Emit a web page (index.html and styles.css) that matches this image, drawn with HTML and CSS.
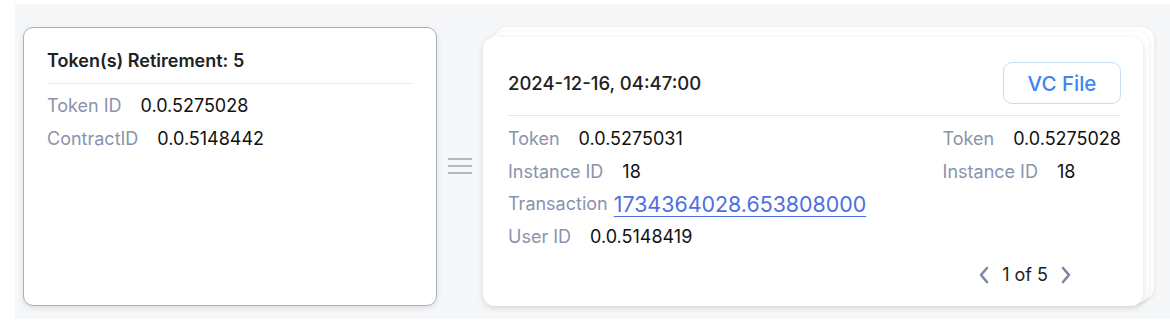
FILE: index.html
```html
<!DOCTYPE html>
<html lang="en">
<head>
    <meta charset="UTF-8">
    <meta name="viewport" content="width=device-width, initial-scale=1.0">
    <title>Token Retirement</title>
    <link rel="stylesheet" href="styles.css">
</head>
<body>
    <div class="board">
        <div class="retire-card">
            <div class="retire-title">Token(s) Retirement: 5</div>
            <div class="row"><span class="label">Token ID</span><span class="value">0.0.5275028</span></div>
            <div class="row"><span class="label">ContractID</span><span class="value">0.0.5148442</span></div>
        </div>

        <div class="handle">
            <span></span><span></span><span></span>
        </div>

        <div class="stack">
            <div class="stack-back back-2"></div>
            <div class="stack-back back-1"></div>
            <div class="vc-card">
                <div class="vc-head">
                    <span class="vc-date">2024-12-16, 04:47:00</span>
                    <button type="button" class="vc-btn">VC File</button>
                </div>
                <div class="vc-body">
                    <div class="vc-col">
                        <div class="row"><span class="label">Token</span><span class="value">0.0.5275031</span></div>
                        <div class="row"><span class="label">Instance ID</span><span class="value">18</span></div>
                        <div class="row"><span class="label">Transaction</span><a class="tx-link" href="#">1734364028.653808000</a></div>
                        <div class="row"><span class="label">User ID</span><span class="value">0.0.5148419</span></div>
                    </div>
                    <div class="vc-col">
                        <div class="row"><span class="label">Token</span><span class="value">0.0.5275028</span></div>
                        <div class="row"><span class="label">Instance ID</span><span class="value">18</span></div>
                    </div>
                </div>
                <div class="pager">
                    <svg width="12" height="18" viewBox="0 0 12 18"><path d="M9 2 L3 9 L9 16" fill="none" stroke="#7d87a3" stroke-width="2.6" stroke-linecap="round" stroke-linejoin="round"/></svg>
                    <span class="pager-text">1 of 5</span>
                    <svg width="12" height="18" viewBox="0 0 12 18"><path d="M3 2 L9 9 L3 16" fill="none" stroke="#7d87a3" stroke-width="2.6" stroke-linecap="round" stroke-linejoin="round"/></svg>
                </div>
            </div>
        </div>
    </div>
</body>
</html>
```
FILE: styles.css
```css
body {
    margin: 0;
    background-color: #ffffff;
    font-family: Inter, "Noto Sans", sans-serif;
    color: #111;
}
.board {
    margin: 4px 0 0 15px;
    height: 315px;
    box-sizing: border-box;
    padding: 23px 0 0 8px;
    background-color: #f6f7f9;
    display: flex;
    align-items: flex-start;
}
.retire-card {
    width: 414px;
    height: 279px;
    box-sizing: border-box;
    padding: 22px 24px 0 23px;
    background-color: #fff;
    border: 1.5px solid #a9afc1;
    border-radius: 10px;
    box-shadow: 0 2px 6px rgba(0, 0, 0, 0.1);
}
.retire-title {
    font-size: 18px;
    font-weight: 600;
    line-height: 22px;
    color: #222;
    padding-bottom: 11px;
    border-bottom: 1px solid #e8ebf0;
    margin-bottom: 5px;
}
.row {
    display: flex;
    align-items: center;
    height: 33px;
    font-size: 18px;
    white-space: nowrap;
}
.label {
    color: #8a93ac;
    margin-right: 19px;
}
.value {
    color: #111;
}
.handle {
    width: 24px;
    margin: 131px 11px 0 11px;
    display: flex;
    flex-direction: column;
    gap: 5px;
}
.handle span {
    height: 2px;
    background-color: #b4b8c3;
}
.stack {
    position: relative;
    padding: 10px 11px 0 0;
}
.stack-back {
    position: absolute;
    background-color: #fff;
    border-radius: 12px;
    box-shadow: 0 1px 4px rgba(0, 0, 0, 0.1);
}
.back-2 {
    top: 0;
    left: 12px;
    right: 0;
    height: 273px;
}
.back-1 {
    top: 5px;
    left: 7px;
    right: 5px;
    height: 271px;
}
.vc-card {
    position: relative;
    width: 660px;
    height: 269px;
    box-sizing: border-box;
    padding: 25px 22px 0 25px;
    background-color: #fff;
    border-radius: 12px;
    box-shadow: 0 2px 6px rgba(0, 0, 0, 0.14);
}
.vc-head {
    display: flex;
    align-items: center;
    justify-content: space-between;
    padding-bottom: 11px;
    border-bottom: 1px solid #e3e7ee;
    margin-bottom: 6px;
}
.vc-date {
    font-size: 18.5px;
    font-weight: 500;
    color: #222;
}
.vc-btn {
    width: 118px;
    height: 42px;
    font-family: inherit;
    font-size: 20.5px;
    font-weight: 500;
    color: #3f86ee;
    background-color: #fff;
    border: 1px solid #c9dcf7;
    border-radius: 9px;
    cursor: pointer;
}
.vc-body {
    display: flex;
    justify-content: space-between;
}
.vc-body .row {
    height: 32.7px;
}
.tx-link {
    margin-left: -13px;
    font-size: 21.4px;
    color: #4f6fe0;
    text-decoration: underline;
    text-underline-offset: 4px;
    text-decoration-thickness: 1px;
}
.pager {
    display: flex;
    justify-content: flex-end;
    align-items: center;
    gap: 12px;
    margin-top: 10px;
    padding-right: 49px;
    height: 24px;
    font-size: 18px;
    color: #222;
}
```
